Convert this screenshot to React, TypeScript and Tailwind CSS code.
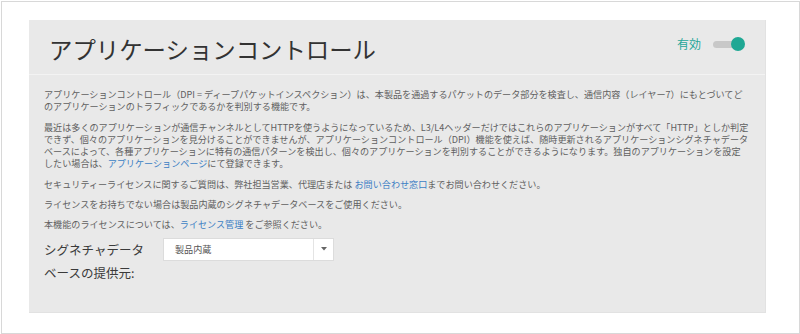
import React from "react";

const jp = { fontFamily: '"Noto Sans CJK JP", "Noto Sans", sans-serif' };

function Link({ children }: { children: React.ReactNode }) {
  return <span className="text-[#3b7ec4]">{children}</span>;
}

export default function App() {
  return (
    <div className="w-[800px] h-[334px] bg-white" style={jp}>
      <div className="ml-[1px] mt-[1px] w-[799px] h-[333px] border border-[#d8d8d8] pl-[27px] pt-[18px]">
        <div className="w-[737px] h-[293px] bg-[#e9e9e9] border-r border-b border-[#e2e2e2]">
          {/* header */}
          <div className="h-[55px] flex items-center justify-between pl-[20px] pr-[20px] border-b border-[#f3f3f3]">
            <h1 className="text-[23.4px] leading-[30px] text-[#333] font-normal tracking-[0px] mt-[4px]">
              アプリケーションコントロール
            </h1>
            <div className="flex items-center mt-[-6px]">
              <span className="text-[12px] leading-[16px] text-[#26a69a]">有効</span>
              <div className="relative ml-[12px] w-[32px] h-[14px] flex items-center">
                <div className="w-[26px] h-[7px] rounded-full bg-[#c8c8c8]" />
                <div className="absolute right-0 top-0 w-[14px] h-[14px] rounded-full bg-[#1fa894]" />
              </div>
            </div>
          </div>
          {/* body */}
          <div className="pl-[15px] pr-[10px] pt-[13px] text-[9.1px] leading-[12.3px] text-[#606060] whitespace-nowrap">
            <p>
              アプリケーションコントロール（DPI = ディープパケットインスペクション）は、本製品を通過するパケットのデータ部分を検査し、通信内容（レイヤー7）にもとづいてど
              <br />
              のアプリケーションのトラフィックであるかを判別する機能です。
            </p>
            <p className="mt-[8px]">
              最近は多くのアプリケーションが通信チャンネルとしてHTTPを使うようになっているため、L3/L4ヘッダーだけではこれらのアプリケーションがすべて「HTTP」としか判定
              <br />
              できず、個々のアプリケーションを見分けることができませんが、アプリケーションコントロール（DPI）機能を使えば、随時更新されるアプリケーションシグネチャデータ
              <br />
              ベースによって、各種アプリケーションに特有の通信パターンを検出し、個々のアプリケーションを判別することができるようになります。独自のアプリケーションを設定
              <br />
              したい場合は、<Link>アプリケーションページ</Link>にて登録できます。
            </p>
            <p className="mt-[8px]">
              セキュリティーライセンスに関するご質問は、弊社担当営業、代理店または <Link>お問い合わせ窓口</Link>までお問い合わせください。
            </p>
            <p className="mt-[8px]">
              ライセンスをお持ちでない場合は製品内蔵のシグネチャデータベースをご使用ください。
            </p>
            <p className="mt-[8px]">
              本機能のライセンスについては、<Link>ライセンス管理</Link> をご参照ください。
            </p>
            <div className="mt-[7px] flex items-start">
              <div className="w-[108px] whitespace-normal text-[12.5px] leading-[23px] text-[#3a3a3a]">
                シグネチャデータベースの提供元:
              </div>
              <div className="ml-[11px] w-[171px] h-[23px] bg-white border border-[#dcdcdc] flex items-center">
                <span className="flex-1 pl-[11px] text-[9.1px] text-[#555]">製品内蔵</span>
                <div className="w-[20px] h-full border-l border-[#e4e4e4] flex items-center justify-center">
                  <svg width="6" height="4" viewBox="0 0 6 4">
                    <path d="M0 0 L6 0 L3 3.5 Z" fill="#666" />
                  </svg>
                </div>
              </div>
            </div>
          </div>
        </div>
      </div>
    </div>
  );
}
